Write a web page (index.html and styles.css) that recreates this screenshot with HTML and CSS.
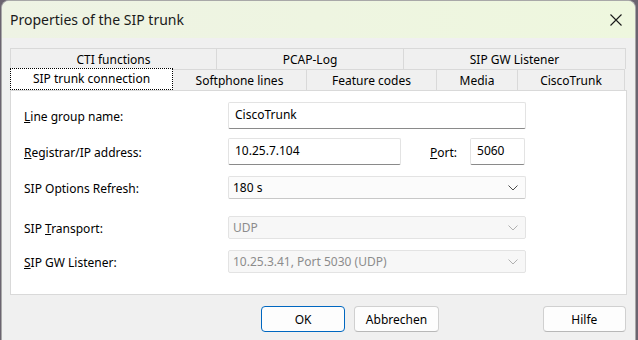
FILE: index.html
```html
<!DOCTYPE html>
<html lang="en">
<head>
    <meta charset="UTF-8">
    <title>Properties of the SIP trunk</title>
    <link rel="stylesheet" href="styles.css">
</head>
<body>
    <div class="window">
        <div class="titlebar">
            <span class="title">Properties of the SIP trunk</span>
            <svg class="close" width="12" height="12" viewBox="0 0 12 12">
                <path d="M0.5 0.5 L11.5 11.5 M11.5 0.5 L0.5 11.5" stroke="#1a1a1a" stroke-width="1.1" fill="none"/>
            </svg>
        </div>
        <div class="content">
            <div class="tabs">
                <div class="tab-row">
                    <div class="tab t-cti">CTI functions</div>
                    <div class="tab t-pcap">PCAP-Log</div>
                    <div class="tab t-gw">SIP GW Listener</div>
                </div>
                <div class="tab-row">
                    <div class="tab t-conn active"><span>SIP trunk connection</span></div>
                    <div class="tab t-soft">Softphone lines</div>
                    <div class="tab t-feat">Feature codes</div>
                    <div class="tab t-media">Media</div>
                    <div class="tab t-cisco">CiscoTrunk</div>
                </div>
            </div>
            <div class="panel">
                <div class="row r1">
                    <label class="lbl"><u>L</u>ine group name:</label>
                    <div class="edit wide">CiscoTrunk</div>
                </div>
                <div class="row r2">
                    <label class="lbl"><u>R</u>egistrar/IP address:</label>
                    <div class="edit ip">10.25.7.104</div>
                    <label class="lbl port-lbl"><u>P</u>ort:</label>
                    <div class="edit port">5060</div>
                </div>
                <div class="row r3">
                    <label class="lbl">SIP Options Refresh:</label>
                    <div class="combo">
                        <span>180 s</span>
                        <svg width="10" height="6" viewBox="0 0 10 6"><path d="M0.5 0.5 L5 5 L9.5 0.5" stroke="#4a4a4a" fill="none"/></svg>
                    </div>
                </div>
                <div class="row r4">
                    <label class="lbl">SIP <u>T</u>ransport:</label>
                    <div class="combo disabled">
                        <span>UDP</span>
                        <svg width="10" height="6" viewBox="0 0 10 6"><path d="M0.5 0.5 L5 5 L9.5 0.5" stroke="#b0b0b0" fill="none"/></svg>
                    </div>
                </div>
                <div class="row r5">
                    <label class="lbl"><u>S</u>IP GW Listener:</label>
                    <div class="combo disabled">
                        <span>10.25.3.41, Port 5030 (UDP)</span>
                        <svg width="10" height="6" viewBox="0 0 10 6"><path d="M0.5 0.5 L5 5 L9.5 0.5" stroke="#b0b0b0" fill="none"/></svg>
                    </div>
                </div>
            </div>
            <div class="buttons">
                <button class="btn default">OK</button>
                <button class="btn">Abbrechen</button>
                <button class="btn help">Hilfe</button>
            </div>
        </div>
    </div>
</body>
</html>
```

FILE: styles.css
```css
body {
    margin: 0;
    background-color: #6b6470;
    font-family: 'Segoe UI', 'Noto Sans', 'Liberation Sans', sans-serif;
    font-size: 12px;
    color: #000;
}
.window {
    width: 635px;
    height: 340px;
    margin-left: 1px;
    background-color: #f0f0f0;
    border: 1px solid #a8a8a8;
    border-bottom: none;
    border-radius: 8px 8px 0 0;
    box-sizing: border-box;
    overflow: hidden;
}
.titlebar {
    height: 37px;
    display: flex;
    align-items: center;
    justify-content: space-between;
    padding: 0 13px 0 8px;
    background: linear-gradient(90deg, #eef3e4, #eef7de);
}
.title {
    font-size: 14px;
    color: #1a1a1a;
    padding-bottom: 1px;
}
.close {
    margin-top: 1px;
}
.content {
    padding: 10px 0 0 8px;
}
.tabs {
    width: 615px;
}
.tab-row {
    display: flex;
    height: 21px;
}
.tab {
    box-sizing: border-box;
    border: 1px solid #d9d9d9;
    border-bottom: none;
    margin-right: -1px;
    text-align: center;
    line-height: 21px;
    background-color: #f0f0f0;
}
.t-cti { width: 207px; }
.t-pcap { width: 188px; }
.t-gw { width: 223px; }
.t-conn { width: 163px; }
.t-soft { width: 135px; }
.t-feat { width: 131px; }
.t-media { width: 82px; }
.t-cisco { width: 108px; }
.tab.active {
    background-color: #fff;
    position: relative;
    top: -1px;
    height: 22px;
    border: none;
    padding: 0;
}
.tab.active span {
    display: block;
    height: 20px;
    border: 1px dotted #000;
    line-height: 20px;
}
.panel {
    width: 617px;
    height: 205px;
    box-sizing: border-box;
    background-color: #fff;
    border: 1px solid #d9d9d9;
    padding: 0 0 0 13px;
}
.row {
    display: flex;
    align-items: center;
}
.lbl {
    width: 204px;
    padding-top: 2px;
}
.r1 { margin-top: 11px; height: 27px; }
.r2 { margin-top: 9px; height: 27px; }
.r3 { margin-top: 11px; height: 23px; }
.r4 { margin-top: 17px; height: 23px; }
.r5 { margin-top: 11px; height: 23px; }
.edit {
    box-sizing: border-box;
    height: 27px;
    border: 1px solid #e3e3e3;
    border-bottom: 1px solid #8a8a8a;
    border-radius: 2px;
    padding: 3px 0 0 6px;
    background-color: #fff;
}
.wide { width: 298px; }
.ip { width: 173px; }
.port-lbl {
    width: auto;
    margin-left: 29px;
    margin-right: 13px;
}
.port { width: 55px; padding-left: 6px; }
.combo {
    box-sizing: border-box;
    width: 298px;
    height: 23px;
    display: flex;
    align-items: center;
    justify-content: space-between;
    border: 1px solid #e3e3e3;
    border-bottom-color: #c8c8c8;
    border-radius: 2px;
    padding: 0 7px 0 4px;
    background-color: #fbfbfb;
}
.combo.disabled {
    border-bottom-color: #e3e3e3;
    background-color: #f7f7f7;
    color: #8c8c8c;
}
.buttons {
    display: flex;
    margin-top: 11px;
    padding-left: 251px;
}
.btn {
    box-sizing: border-box;
    width: 86px;
    height: 26px;
    margin-right: 9px;
    font-family: inherit;
    font-size: 12px;
    background-color: #fdfdfd;
    border: 1px solid #d0d0d0;
    border-bottom-color: #b8b8b8;
    border-radius: 4px;
    padding: 0;
}
.btn.default {
    border: 1px solid #0067c0;
}
.btn.help {
    width: 85px;
    margin-left: 95px;
}
```
